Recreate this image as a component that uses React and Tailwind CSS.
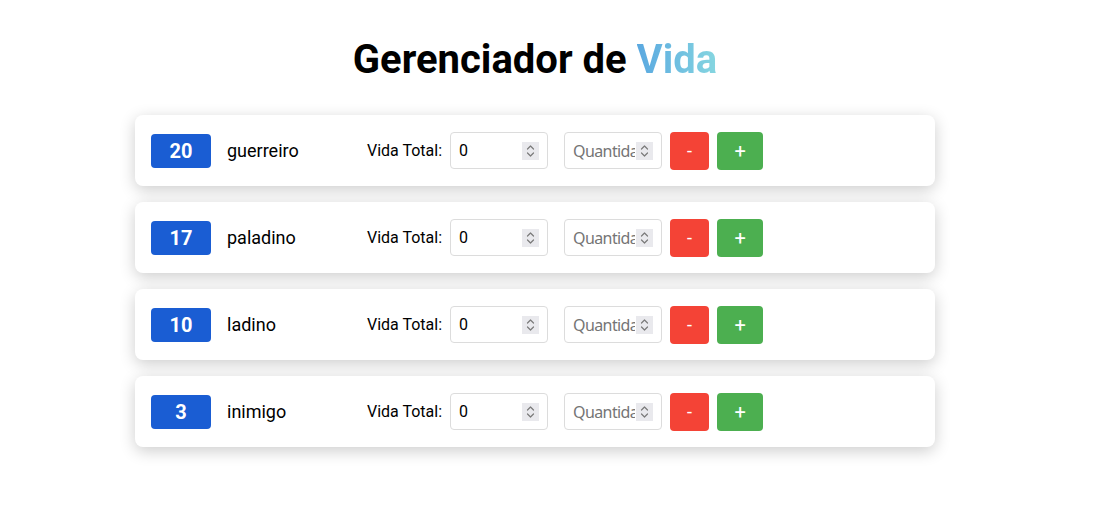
import React from "react";

const rows = [
  { n: 20, name: "guerreiro" },
  { n: 17, name: "paladino" },
  { n: 10, name: "ladino" },
  { n: 3, name: "inimigo" },
];

function Spinner() {
  return (
    <div className="absolute right-[9px] top-1/2 -translate-y-1/2 w-[17px] h-[18px] bg-[#e9e9ed] flex items-center justify-center pointer-events-none">
      <svg width="9" height="14" viewBox="0 0 9 14" fill="none" stroke="#7a7a7a" strokeWidth="1.2" strokeLinecap="round" strokeLinejoin="round">
        <path d="M1.5 5 L4.5 2 L7.5 5" />
        <path d="M1.5 9 L4.5 12 L7.5 9" />
      </svg>
    </div>
  );
}

function NumInput({ value, placeholder, font, size, track }) {
  return (
    <div className="relative w-[98px] h-[37px]">
      <input
        type="number"
        defaultValue={value}
        placeholder={placeholder}
        className="w-full h-full border border-[#dcdcdc] rounded-[4px] pl-2 pr-[26px] text-black placeholder:text-[#757575] outline-none appearance-none [&::-webkit-inner-spin-button]:appearance-none [&::-webkit-outer-spin-button]:appearance-none"
        style={{ fontFamily: font, fontSize: size, letterSpacing: track }}
      />
      <Spinner />
    </div>
  );
}

export default function App() {
  return (
    <div className="w-[1070px] bg-white flex flex-col items-center pt-[36px] pb-10" style={{ fontFamily: "Roboto, 'Liberation Sans', sans-serif" }}>
      <h1 className="text-[40px] leading-[48px] font-bold text-black m-0">
        Gerenciador de{" "}
        <span className="bg-gradient-to-r from-[#5aa8e0] to-[#86d6e0] bg-clip-text text-transparent">Vida</span>
      </h1>
      <div className="mt-[31px] w-[800px] flex flex-col gap-[16px]">
        {rows.map((r) => (
          <div key={r.name} className="h-[71px] bg-white rounded-[8px] shadow-[0_4px_16px_rgba(0,0,0,0.2)] flex items-center px-4">
            <div className="w-[60px] h-[34px] rounded-[4px] bg-[#1a5dd3] text-white font-bold text-[20px] flex items-center justify-center">
              {r.n}
            </div>
            <div className="ml-4 w-[140px] text-[18px] text-black">{r.name}</div>
            <div className="flex items-center">
              <span className="text-[16px] text-black mr-2">Vida Total:</span>
              <NumInput value="0" font="Roboto, sans-serif" size="16px" />
              <div className="ml-4">
                <NumInput placeholder="Quantidade" font="'Noto Sans', sans-serif" size="16px" track="-0.6px" />
              </div>
              <button className="ml-2 w-[39px] h-[38px] rounded-[4px] bg-[#f44336] text-white text-[18px] flex items-center justify-center">-</button>
              <button className="ml-2 w-[46px] h-[38px] rounded-[4px] bg-[#4caf50] text-white text-[20px] flex items-center justify-center">+</button>
            </div>
          </div>
        ))}
      </div>
    </div>
  );
}
